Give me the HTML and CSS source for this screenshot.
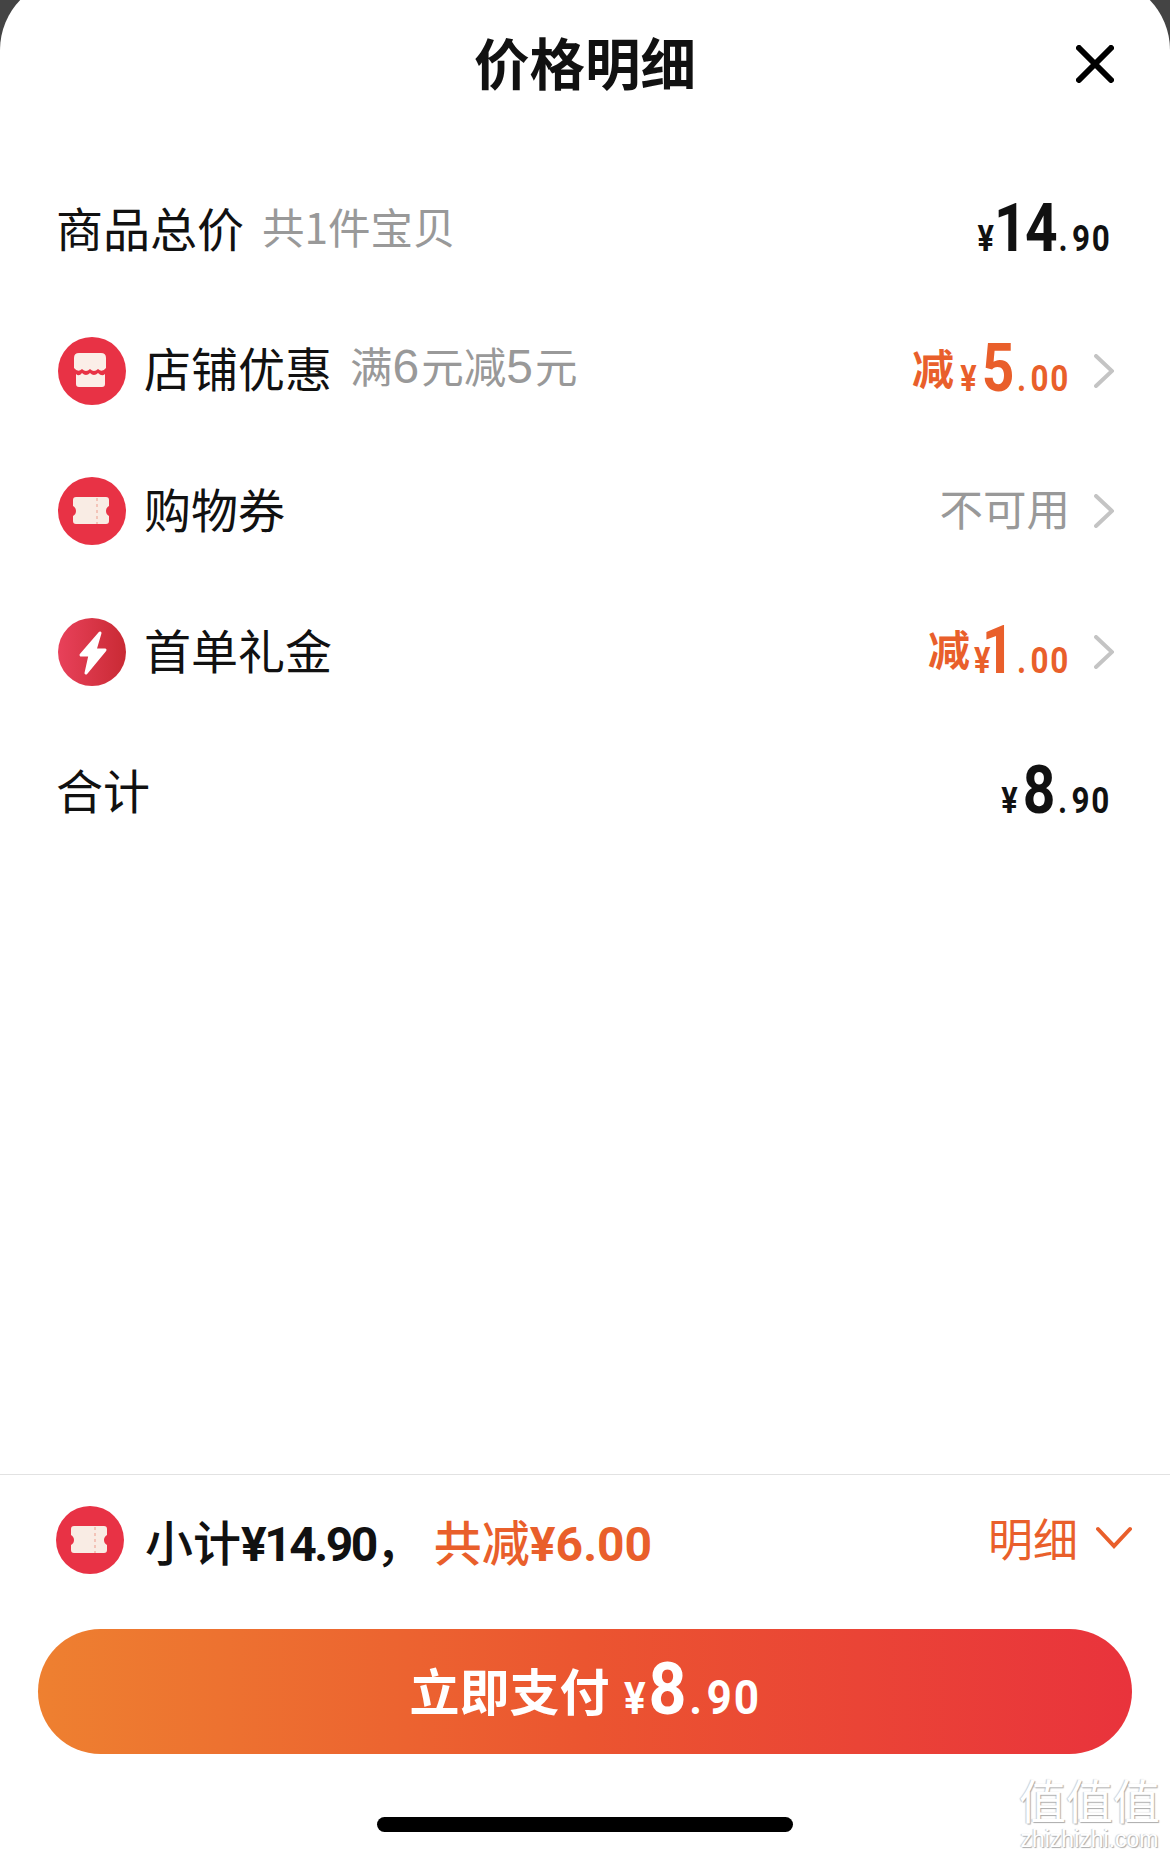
FILE: index.html
```html
<!DOCTYPE html>
<html lang="zh-CN">
<head>
    <meta charset="UTF-8">
    <meta name="viewport" content="width=device-width, initial-scale=1.0">
    <title>价格明细</title>
    <link rel="stylesheet" href="styles.css">
</head>
<body>
    <div class="sheet">
        <header class="sheet-head">
            <span></span>
            <h1>价格明细</h1>
            <svg class="close" viewBox="0 0 38 38"><path d="M3 3 L35 35 M35 3 L3 35"/></svg>
        </header>

        <div class="list">
            <div class="row">
                <div class="row-left">
                    <span class="label">商品总价</span>
                    <span class="sub">共1件宝贝</span>
                </div>
                <div class="row-right no-arrow">
                    <span class="price"><span class="yen">¥</span><span class="big">14</span><span class="small"><span class="dot">.</span>90</span></span>
                </div>
            </div>

            <div class="row">
                <div class="row-left">
                    <svg class="icon" viewBox="0 0 68 68">
                        <circle cx="34" cy="34" r="34" fill="#e83245"/>
                        <path fill="#fbeee8" d="M21 16 H43 Q48 16 48 21 V31 Q44 36 40 32 Q36 36 32 32 Q28 36 24 32 Q20 36 16 31 V21 Q16 16 21 16 Z"/>
                        <path fill="#fbeee8" d="M18 37 Q21 40 24 36 Q28 40 32 36 Q36 40 40 36 Q44 40 47 37 V47 Q47 50 44 50 H21 Q18 50 18 47 Z"/>
                    </svg>
                    <span class="label">店铺优惠</span>
                    <span class="sub">满<span class="digit">6</span>元减<span class="digit">5</span>元</span>
                </div>
                <div class="row-right">
                    <span class="cut">减</span>
                    <span class="price orange"><span class="yen">¥</span><span class="big wide">5</span><span class="small"><span class="dot">.</span>00</span></span>
                    <svg class="arrow" viewBox="0 0 20 34"><path d="M2 2 L18 17 L2 32"/></svg>
                </div>
            </div>

            <div class="row">
                <div class="row-left">
                    <svg class="icon" viewBox="0 0 68 68">
                        <circle cx="34" cy="34" r="34" fill="#e83245"/>
                        <path fill="#f9ece4" d="M18 20 H48 C50 20 51 21 51 23 V29 C49 30 48 32 48 34 C48 36 49 38 51 39 V44 C51 46 50 47 48 47 H18 C16 47 15 46 15 44 V39 C17 38 18 36 18 34 C18 32 17 30 15 29 V23 C15 21 16 20 18 20 Z"/>
                        <path stroke="#f3c4b8" stroke-width="2" stroke-dasharray="3 3" fill="none" d="M39 21 V47"/>
                    </svg>
                    <span class="label">购物券</span>
                </div>
                <div class="row-right">
                    <span class="sub state">不可用</span>
                    <svg class="arrow" viewBox="0 0 20 34"><path d="M2 2 L18 17 L2 32"/></svg>
                </div>
            </div>

            <div class="row">
                <div class="row-left">
                    <svg class="icon" viewBox="0 0 68 68">
                        <defs>
                            <linearGradient id="boltBg" x1="0" x2="1" y1="0" y2="0">
                                <stop offset="0" stop-color="#e8415a"/>
                                <stop offset="1" stop-color="#c92a34"/>
                            </linearGradient>
                        </defs>
                        <circle cx="34" cy="34" r="34" fill="url(#boltBg)"/>
                        <path fill="#fff" stroke="#fff" stroke-width="3" stroke-linejoin="round" d="M42 15 L23 37 H32 L28 55 L47 32 H37 Z"/>
                    </svg>
                    <span class="label">首单礼金</span>
                </div>
                <div class="row-right">
                    <span class="cut">减</span>
                    <span class="price orange"><span class="yen">¥</span><span class="big one">1</span><span class="small"><span class="dot">.</span>00</span></span>
                    <svg class="arrow" viewBox="0 0 20 34"><path d="M2 2 L18 17 L2 32"/></svg>
                </div>
            </div>

            <div class="row">
                <div class="row-left">
                    <span class="label">合计</span>
                </div>
                <div class="row-right no-arrow">
                    <span class="price"><span class="yen">¥</span><span class="big wide">8</span><span class="small"><span class="dot">.</span>90</span></span>
                </div>
            </div>
        </div>

        <footer class="foot">
            <div class="summary">
                <svg class="icon" viewBox="0 0 68 68">
                    <circle cx="34" cy="34" r="34" fill="#e83245"/>
                    <path fill="#f9ece4" d="M18 20 H48 C50 20 51 21 51 23 V29 C49 30 48 32 48 34 C48 36 49 38 51 39 V44 C51 46 50 47 48 47 H18 C16 47 15 46 15 44 V39 C17 38 18 36 18 34 C18 32 17 30 15 29 V23 C15 21 16 20 18 20 Z"/>
                    <path stroke="#f3c4b8" stroke-width="2" stroke-dasharray="3 3" fill="none" d="M39 21 V47"/>
                </svg>
                <span class="total">小计<span class="num">¥14.90</span>，</span>
                <span class="total orange">共减<span class="num">¥6.00</span></span>
                <span class="detail">明细</span>
                <svg class="down" viewBox="0 0 36 24"><path d="M2 3 L18 20 L34 3"/></svg>
            </div>
            <button class="pay">
                <span class="pay-text">立即支付</span>
                <span class="price"><span class="yen">¥</span><span class="big">8</span><span class="small"><span class="dot">.</span>90</span></span>
            </button>
            <div class="home-bar"></div>
        </footer>

        <div class="watermark">
            <div class="wm-mark">值值值</div>
            <div class="wm-url">zhizhizhi.com</div>
        </div>
    </div>
</body>
</html>
```

FILE: styles.css
```css
* {
    box-sizing: border-box;
}
html, body {
    height: 1856px;
    overflow: hidden;
}
body {
    margin: 0;
    background: #444;
    font-family: "Noto Sans CJK SC", "Liberation Sans", sans-serif;
    color: #111;
}
/* top of the sheet sits a little above the screen, so the corners look cut */
.sheet {
    position: relative;
    width: 1170px;
    height: 1878px;
    margin-top: -22px;
    padding-top: 22px;
    background: #fff;
    border-radius: 72px 72px 0 0;
    display: flex;
    flex-direction: column;
    overflow: hidden;
}
.sheet-head {
    height: 128px;
    display: grid;
    grid-template-columns: 1fr auto 1fr;
    align-items: center;
    padding: 0 56px;
}
.sheet-head h1 {
    margin: 0 0 4px;
    font-size: 55.5px;
    font-weight: 700;
    line-height: 1;
    color: #111;
}
.close {
    width: 38px;
    height: 38px;
    justify-self: end;
    fill: none;
    stroke: #000;
    stroke-width: 6;
    stroke-linecap: round;
}
.list {
    padding: 32px 56px 0 58px;
}
.row {
    height: 140.6px;
    display: flex;
    align-items: center;
    justify-content: space-between;
}
.row-left {
    display: flex;
    align-items: center;
}
.icon {
    width: 68px;
    height: 68px;
    margin-right: 18px;
    flex-shrink: 0;
}
.label {
    font-size: 47px;
    line-height: 1;
    margin-bottom: 8px;
    color: #111;
}
.row-left > .label:first-child {
    margin-left: -2px;
}
.sub {
    font-size: 42.5px;
    line-height: 1;
    margin-bottom: 8px;
    color: #999;
}
.sub .digit {
    font-family: "Liberation Sans", sans-serif;
    font-size: 48px;
    line-height: 1;
    letter-spacing: 2px;
}
.row-left .sub {
    margin-left: 18px;
}
.state {
    font-size: 43.5px;
}
.row-right {
    display: flex;
    align-items: center;
}
.no-arrow {
    padding-right: 3px;
}
.arrow {
    width: 20px;
    height: 34px;
    margin-left: 24px;
    fill: none;
    stroke: #c4c4c4;
    stroke-width: 4;
    stroke-linecap: round;
}
/* DIN style digits: no narrow font is installed, so squeeze Roboto */
.price {
    display: inline-flex;
    align-items: baseline;
    margin-bottom: 4px;
    font-family: Roboto, "Liberation Sans", sans-serif;
    font-weight: 700;
    line-height: 1;
    color: #111;
    transform: scaleX(0.85);
    transform-origin: right center;
}
.price .yen {
    font-size: 36px;
}
.price .big {
    font-size: 67px;
    letter-spacing: -2px;
}
.price .big.wide {
    margin-left: 6px;
    letter-spacing: 0;
}
.price .big.one {
    margin-left: -10px;
    letter-spacing: 0;
}
.price .small {
    font-size: 37px;
    font-weight: 700;
    letter-spacing: 2px;
}
.price .dot {
    margin: 0 3px;
}
.orange,
.price.orange {
    color: #e95f2b;
}
.cut {
    font-size: 42px;
    line-height: 1;
    font-weight: 700;
    color: #e95f2b;
    margin: 0 -13px 8px 0;
}
.foot {
    margin-top: auto;
    border-top: 1px solid #e2e2e2;
    padding: 0 38px 24px;
}
.summary {
    height: 130px;
    display: flex;
    align-items: center;
    padding: 0 0 0 18px;
    font-size: 48px;
}
.summary .icon {
    margin-right: 21px;
}
.total {
    font-weight: 500;
    line-height: 1;
    margin-top: 4px;
    white-space: nowrap;
}
.total .num {
    font-family: Roboto, "Liberation Sans", sans-serif;
    font-weight: 700;
    font-size: 48px;
    letter-spacing: -2.5px;
}
.total.orange {
    margin-left: 10px;
}
.total.orange .num {
    letter-spacing: 0;
}
.detail {
    margin-left: auto;
    margin-bottom: 6px;
    color: #e95f2b;
    font-size: 45px;
    line-height: 1;
}
.down {
    width: 36px;
    height: 24px;
    margin-left: 18px;
    margin-top: -4px;
    fill: none;
    stroke: #e95f2b;
    stroke-width: 4;
    stroke-linecap: round;
}
.pay {
    display: flex;
    width: 1094px;
    height: 125px;
    margin: 24px 0 0;
    padding: 0;
    align-items: center;
    justify-content: center;
    border: none;
    border-radius: 63px;
    background: linear-gradient(90deg, #ee8030, #eb5530 50%, #e9333c);
    color: #fff;
    font-family: inherit;
}
.pay-text {
    font-size: 50px;
    font-weight: 700;
    line-height: 1;
    margin: 0 2px 6px 0;
}
.pay .price {
    color: #fff;
    transform: scaleX(0.92);
}
.pay .big {
    font-size: 72px;
    margin-left: 3px;
    letter-spacing: 0;
}
.pay .small {
    font-size: 48px;
    letter-spacing: 2px;
}
.pay .yen {
    font-size: 44px;
}
.home-bar {
    width: 416px;
    height: 15px;
    margin: 63px auto 0;
    border-radius: 8px;
    background: #000;
}
.watermark {
    position: absolute;
    left: 1017px;
    top: 1792px;
    width: 145px;
    text-align: center;
    color: #fff;
    text-shadow: 1px 1px 1px #aaa, -1px 0 1px #ccc;
}
.wm-mark {
    font-size: 47px;
    line-height: 58px;
}
.wm-url {
    font-family: "Liberation Sans", sans-serif;
    font-size: 23px;
    line-height: 22px;
}
```
